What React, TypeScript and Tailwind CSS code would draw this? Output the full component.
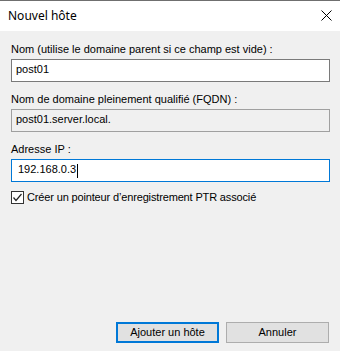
import React from "react";

const body = { fontFamily: '"Liberation Sans", Arial, sans-serif' } as const;

function Field({
  label,
  value,
  variant,
}: {
  label: string;
  value: string;
  variant: "normal" | "readonly" | "focus";
}) {
  const box =
    variant === "focus"
      ? "border-[#0078d7] bg-white"
      : variant === "readonly"
      ? "border-[#a0a0a0] bg-[#f0f0f0]"
      : "border-[#7a7a7a] bg-white";
  return (
    <div className="flex flex-col">
      <div className="h-[13px] text-[11px] leading-[13px] text-black">{label}</div>
      <div className={`mt-[3px] h-[23px] border ${box} pt-[3px] ${variant === "focus" ? "pl-[6px]" : "pl-[4px]"} flex items-start`}>
        <span className="text-[11px] leading-[13px] text-black">{value}</span>
        {variant === "focus" && <span className="ml-[1px] mt-[1px] h-[14px] w-[1px] bg-black" />}
      </div>
    </div>
  );
}

export default function App() {
  return (
    <div className="w-[340px] h-[351px] flex flex-col overflow-hidden" style={body}>
      <div className="h-[31px] border-t border-[#6f6f6f] bg-white flex items-center justify-between pl-[8px] pr-[8px]">
        <span className="text-[12px] leading-[16px] text-black" style={{ fontFamily: '"Noto Sans", sans-serif' }}>
          Nouvel hôte
        </span>
        <svg width="11" height="11" viewBox="0 0 11 11" className="mb-[1px]">
          <path d="M0.5 0.5 L10.5 10.5 M10.5 0.5 L0.5 10.5" stroke="#000" strokeWidth="1" fill="none" />
        </svg>
      </div>
      <div className="flex-1 bg-[#f0f0f0] pl-[11px] pr-[10px] pt-[12px] pb-[8px] flex flex-col">
        <Field label="Nom (utilise le domaine parent si ce champ est vide) :" value="post01" variant="normal" />
        <div className="mt-[11px]">
          <Field label="Nom de domaine pleinement qualifié (FQDN) :" value="post01.server.local." variant="readonly" />
        </div>
        <div className="mt-[11px]">
          <Field label="Adresse IP :" value="192.168.0.3" variant="focus" />
        </div>
        <div className="mt-[9px] flex items-center gap-[3px]">
          <div className="w-[13px] h-[13px] border border-[#333333] bg-white flex items-center justify-center">
            <svg width="11" height="11" viewBox="0 0 11 11">
              <path d="M1.5 5.5 L4 8.5 L9.5 2" stroke="#222" strokeWidth="1.2" fill="none" />
            </svg>
          </div>
          <span className="text-[11px] leading-[13px] tracking-[-0.15px] text-black">Créer un pointeur d’enregistrement PTR associé</span>
        </div>
        <div className="mt-auto flex justify-end gap-[7px] mr-[1px]">
          <button className="w-[103px] h-[21px] border-2 border-[#0078d7] bg-[#e1e1e1] text-[11px] leading-[13px] text-black flex items-center justify-center">
            Ajouter un hôte
          </button>
          <button className="w-[103px] h-[21px] border border-[#adadad] bg-[#e1e1e1] text-[11px] leading-[13px] text-black flex items-center justify-center">
            Annuler
          </button>
        </div>
      </div>
    </div>
  );
}
